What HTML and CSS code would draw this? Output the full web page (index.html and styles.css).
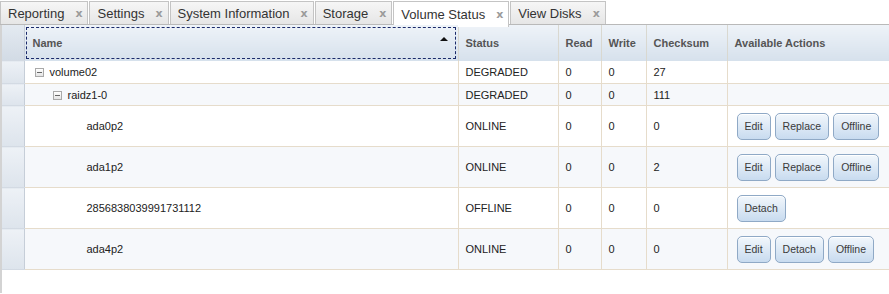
FILE: index.html
```html
<!DOCTYPE html>
<html lang="en">
<head>
    <meta charset="UTF-8">
    <title>Volume Status</title>
    <link rel="stylesheet" href="styles.css">
</head>
<body>
    <div class="tabs">
        <div class="tab">Reporting <span class="close">x</span></div>
        <div class="tab">Settings <span class="close">x</span></div>
        <div class="tab">System Information <span class="close">x</span></div>
        <div class="tab">Storage <span class="close">x</span></div>
        <div class="tab active">Volume Status <span class="close">x</span></div>
        <div class="tab">View Disks <span class="close">x</span></div>
    </div>

    <div class="panel">
        <table class="grid">
            <colgroup>
                <col style="width: 22px">
                <col style="width: 434px">
                <col style="width: 100px">
                <col style="width: 43px">
                <col style="width: 45px">
                <col style="width: 81px">
                <col>
            </colgroup>
            <thead>
                <tr>
                    <th class="gutter"></th>
                    <th class="sorted">Name <span class="arrow"></span></th>
                    <th>Status</th>
                    <th>Read</th>
                    <th>Write</th>
                    <th>Checksum</th>
                    <th>Available Actions</th>
                </tr>
            </thead>
            <tbody>
                <tr class="short first">
                    <td class="gutter"></td>
                    <td><span class="toggle lvl1"></span>volume02</td>
                    <td>DEGRADED</td>
                    <td>0</td>
                    <td>0</td>
                    <td>27</td>
                    <td></td>
                </tr>
                <tr class="short alt">
                    <td class="gutter"></td>
                    <td><span class="toggle lvl2"></span>raidz1-0</td>
                    <td>DEGRADED</td>
                    <td>0</td>
                    <td>0</td>
                    <td>111</td>
                    <td></td>
                </tr>
                <tr>
                    <td class="gutter"></td>
                    <td class="leaf">ada0p2</td>
                    <td>ONLINE</td>
                    <td>0</td>
                    <td>0</td>
                    <td>0</td>
                    <td class="actions"><button>Edit</button><button>Replace</button><button>Offline</button></td>
                </tr>
                <tr class="alt">
                    <td class="gutter"></td>
                    <td class="leaf">ada1p2</td>
                    <td>ONLINE</td>
                    <td>0</td>
                    <td>0</td>
                    <td>2</td>
                    <td class="actions"><button>Edit</button><button>Replace</button><button>Offline</button></td>
                </tr>
                <tr>
                    <td class="gutter"></td>
                    <td class="leaf">2856838039991731112</td>
                    <td>OFFLINE</td>
                    <td>0</td>
                    <td>0</td>
                    <td>0</td>
                    <td class="actions"><button>Detach</button></td>
                </tr>
                <tr class="alt">
                    <td class="gutter"></td>
                    <td class="leaf">ada4p2</td>
                    <td>ONLINE</td>
                    <td>0</td>
                    <td>0</td>
                    <td>0</td>
                    <td class="actions"><button>Edit</button><button>Detach</button><button>Offline</button></td>
                </tr>
            </tbody>
        </table>
    </div>
</body>
</html>
```

FILE: styles.css
```css
body {
    margin: 0;
    padding: 0;
    background: #fff;
    font-family: "Liberation Sans", Arial, sans-serif;
    font-size: 11px;
    color: #222;
}
.tabs {
    display: flex;
    gap: 1px;
    height: 25px;
    padding-top: 1px;
    box-sizing: border-box;
    border-bottom: 1px solid #b9b9b9;
}
.tab {
    display: flex;
    align-items: center;
    gap: 11px;
    padding: 0 5px 0 7px;
    font-family: "Liberation Sans", Arial, sans-serif;
    font-size: 13px;
    color: #333;
    background: linear-gradient(#f6f6f6, #e6e6e6);
    border: 1px solid #c4c4c4;
    border-bottom: none;
}
.tab.active {
    background: #fff;
    height: 25px;
    margin-bottom: -1px;
}
.close {
    font-family: "DejaVu Sans", sans-serif;
    font-weight: bold;
    font-size: 11px;
    color: #9b9b9b;
}
.panel {
    border-left: 2px solid #d3d3d3;
    height: 268px;
}
.grid {
    width: 887px;
    border-collapse: collapse;
    table-layout: fixed;
}
.grid th {
    height: 35px;
    padding: 0 0 0 7px;
    text-align: left;
    font-family: "Liberation Sans", Arial, sans-serif;
    font-size: 11px;
    font-weight: bold;
    color: #555;
    background: linear-gradient(#eef3f8, #d6e1ec);
    border-left: 1px solid #d9d8d0;
}
.grid th.sorted {
    position: relative;
    outline: 1px dashed #1a2a6a;
    outline-offset: -3px;
    padding-left: 8px;
}
.arrow {
    position: absolute;
    right: 10px;
    top: 12px;
    border-left: 4px solid transparent;
    border-right: 4px solid transparent;
    border-bottom: 4px solid #111;
}
.grid td {
    height: 40px;
    padding: 0 0 0 7px;
    border-left: 1px solid #e6dccb;
    border-bottom: 1px solid #e6dccb;
    white-space: nowrap;
}
.grid tr.short td {
    height: 21px;
}
.grid tr.first td {
    height: 22px;
}
.grid tr.alt td {
    background: #f6f8fb;
}
.grid .gutter,
.grid tr.alt td.gutter {
    padding: 0;
    border-left: none;
    border-right: 1px solid #c6ced8;
    border-bottom: 1px solid #d3dae3;
    background: linear-gradient(#edf1f6, #dde4ec);
}
.grid th.gutter {
    background: linear-gradient(#e4eaf1, #d2dbe5);
}
.toggle {
    display: inline-block;
    vertical-align: -1px;
    width: 7px;
    height: 7px;
    margin-right: 6px;
    border: 1px solid #a9a9a9;
    background: linear-gradient(#fff, #e4e4e4);
    position: relative;
}
.toggle::after {
    content: "";
    position: absolute;
    left: 1px;
    right: 1px;
    top: 3px;
    height: 1px;
    background: #666;
}
.lvl1 {
    margin-left: 3px;
}
.lvl2 {
    margin-left: 21px;
}
.leaf {
    padding-left: 62px !important;
}
.actions {
    padding-left: 9px !important;
}
button {
    height: 27px;
    margin-right: 4px;
    padding: 0 7px;
    font-family: "Liberation Sans", Arial, sans-serif;
    font-size: 10.5px;
    color: #3a3a3a;
    border: 1px solid #8fa9c6;
    border-radius: 5px;
    background: linear-gradient(#f2f7fc, #c8dbef);
    box-shadow: inset 0 1px 0 #fff;
}
```
